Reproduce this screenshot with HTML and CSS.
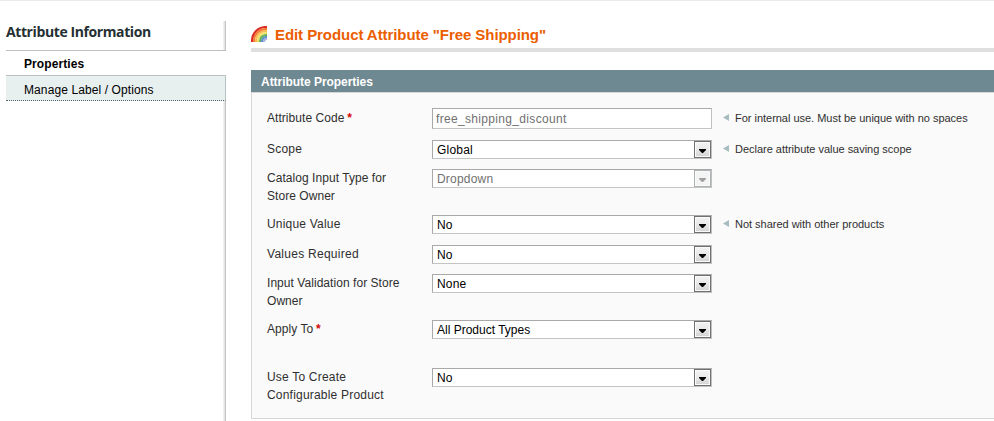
FILE: index.html
```html
<!DOCTYPE html>
<html lang="en">
<head>
<meta charset="utf-8">
<title>Edit Product Attribute</title>
<link rel="stylesheet" href="styles.css">
</head>
<body>
<div class="page">
  <aside class="sidebar">
    <h3>Attribute Information</h3>
    <ul class="tabs">
      <li class="tab active">Properties</li>
      <li class="tab">Manage Label / Options</li>
    </ul>
  </aside>
  <main class="content">
    <header class="page-head">
      <svg class="rainbow" width="16" height="16" viewBox="0 0 16 16" fill="none" stroke-width="2.1">
        <path d="M1 16V14.500C1.300 7 7 1.300 14.500 1H16" stroke="#dc2d22"/>
        <path d="M3 16V14.500C3.300 8 8 3.300 14.500 3H16" stroke="#f47a3a"/>
        <path d="M5 16V14.500C5.300 9 9 5.300 14.500 5H16" stroke="#fbb84e"/>
        <path d="M7 16V15C7.300 10.300 10.300 7.300 15 7H16" stroke="#f3df62"/>
        <path d="M9 16V15C9.300 11.500 11.500 9.300 15 9H16" stroke="#67b453"/>
        <path d="M11 16V15C11.300 12.700 12.700 11.300 15 11H16" stroke="#5b8fd0"/>
        <path d="M13 16V15.300C13.200 14 14 13.200 15.300 13H16" stroke="#a9b5dc"/>
      </svg>
      <h1>Edit Product Attribute "Free Shipping"</h1>
    </header>
    <section class="panel">
      <h4>Attribute Properties</h4>
      <div class="fields">
        <div class="row r32"><label class="first tight">Attribute Code <em>*</em></label><div class="control input">free_shipping_discount</div><p class="note first">For internal use. Must be unique with no spaces</p></div>
        <div class="row r29"><label>Scope</label><div class="control select">Global<i></i></div><p class="note">Declare attribute value saving scope</p></div>
        <div class="row r46"><label class="tight">Catalog Input Type for<br>Store Owner</label><div class="control select disabled">Dropdown<i></i></div></div>
        <div class="row r30"><label>Unique Value</label><div class="control select">No<i></i></div><p class="note">Not shared with other products</p></div>
        <div class="row r29"><label class="wide">Values Required</label><div class="control select">No<i></i></div></div>
        <div class="row r46"><label class="tight">Input Validation for Store<br>Owner</label><div class="control select">None<i></i></div></div>
        <div class="row r48"><label class="tight">Apply To <em>*</em></label><div class="control select compact">All Product Types<i></i></div></div>
        <div class="row r50"><label>Use To Create<br>Configurable Product</label><div class="control select">No<i></i></div></div>
      </div>
    </section>
  </main>
</div>
</body>
</html>
```
FILE: styles.css
```css
* { box-sizing: border-box; }
body {
  margin: 0;
  background: #fff;
  font: 12px/18px "Liberation Sans", Arial, sans-serif;
  color: #2f2f2f;
  overflow: hidden;
}
h1, h3, h4, p, ul { margin: 0; padding: 0; }
.page {
  display: flex;
  height: 421px;
  border-top: 1px solid #ebebeb;
  overflow: hidden;
}
.sidebar {
  width: 220px;
  margin: 20px 0 0 6px;
  background: linear-gradient(90deg, #f0f0f0 0 1px, #e4e4e4 1px 2px, #c4c4c4 2px) right / 3px 100% no-repeat;
}
.sidebar h3 {
  height: 30px;
  border-bottom: 1px solid #bebebe;
  font: bold 14px/22px "Open Sans", sans-serif;
  letter-spacing: -.4px;
  color: #253033;
}
.tabs { list-style: none; color: #000; }
.tab {
  height: 25px;
  padding-left: 18px;
  line-height: 28px;
  letter-spacing: .1px;
  background: #e7efef;
  border-right: 1px solid #b5c2c4;
  border-bottom: 1px dotted #50666a;
}
.tab.active {
  background: #fff;
  font-weight: bold;
  line-height: 26px;
  border-right: 0;
  border-bottom: 1px solid #bebebe;
}
.content { width: 743px; margin-left: 25px; }
.page-head {
  display: flex;
  height: 51px;
  padding-top: 25px;
  border-bottom: 4px solid #dfdfdf;
}
.rainbow { margin-right: 8px; }
h1 {
  font-size: 15px;
  line-height: 18px;
  letter-spacing: -.07px;
  color: #eb5e00;
  white-space: nowrap;
}
.panel { margin-top: 18px; }
h4 {
  height: 22px;
  padding-left: 10px;
  background: #6f8992;
  color: #fff;
  font-size: 12px;
  line-height: 24px;
  letter-spacing: -.04px;
}
.fields {
  height: 327px;
  padding: 15px 0 0 15px;
  background: #fafafa;
  border: 1px solid #d6d6d6;
  border-right: 0;
}
.row { display: flex; align-items: flex-start; }
.r29 { height: 29px; }
.r30 { height: 30px; }
.r32 { height: 32px; }
.r46 { height: 46px; }
.r48 { height: 48px; }
.r50 { height: 50px; }
label { width: 165px; letter-spacing: .2px; white-space: nowrap; }
label.tight { letter-spacing: .05px; }
label.wide { letter-spacing: .27px; }
label.first, .note.first { padding-top: 1px; }
em { margin-left: -.5px; color: #d40707; font-style: normal; font-weight: bold; }
.control {
  display: flex;
  justify-content: space-between;
  width: 280px;
  height: 19px;
  padding-left: 4px;
  background: #fff;
  border: 1px solid;
  border-color: #a9a9a9 #c0c0c0 #c4c4c4 #a9a9a9;
  color: #000;
  line-height: 19px;
  letter-spacing: .2px;
}
.compact { letter-spacing: 0; }
.input {
  height: 21px;
  padding-left: 3px;
  color: #707070;
  line-height: 20px;
  letter-spacing: .33px;
}
.select i {
  display: flex;
  width: 17px;
  height: 17px;
  border: 1px solid #707070;
  background: linear-gradient(#f3f3f3, #e8e8e8 50%, #d2d2d2);
  box-shadow: inset 0 0 0 1px #fafafa;
}
.select i::before {
  content: "";
  width: 7px;
  height: 4px;
  margin: 7px 0 0 4px;
  background: #000;
  clip-path: polygon(0 0, 100% 0, 100% 1px, 4px 100%, 3px 100%, 0 1px);
}
.select.disabled { color: #707070; }
.select.disabled i { border-color: #adb2b5; background: #f4f4f4; }
.select.disabled i::before { background: #a0a0a0; }
.note {
  display: flex;
  margin-left: 11px;
  font-size: 11px;
  letter-spacing: -.02px;
  white-space: nowrap;
}
.note::before {
  content: "";
  width: 6px;
  height: 7px;
  margin: 5px 6px 0 0;
  background: #a8bbbe;
  clip-path: polygon(0 50%, 100% 0, 100% 100%);
}
```
